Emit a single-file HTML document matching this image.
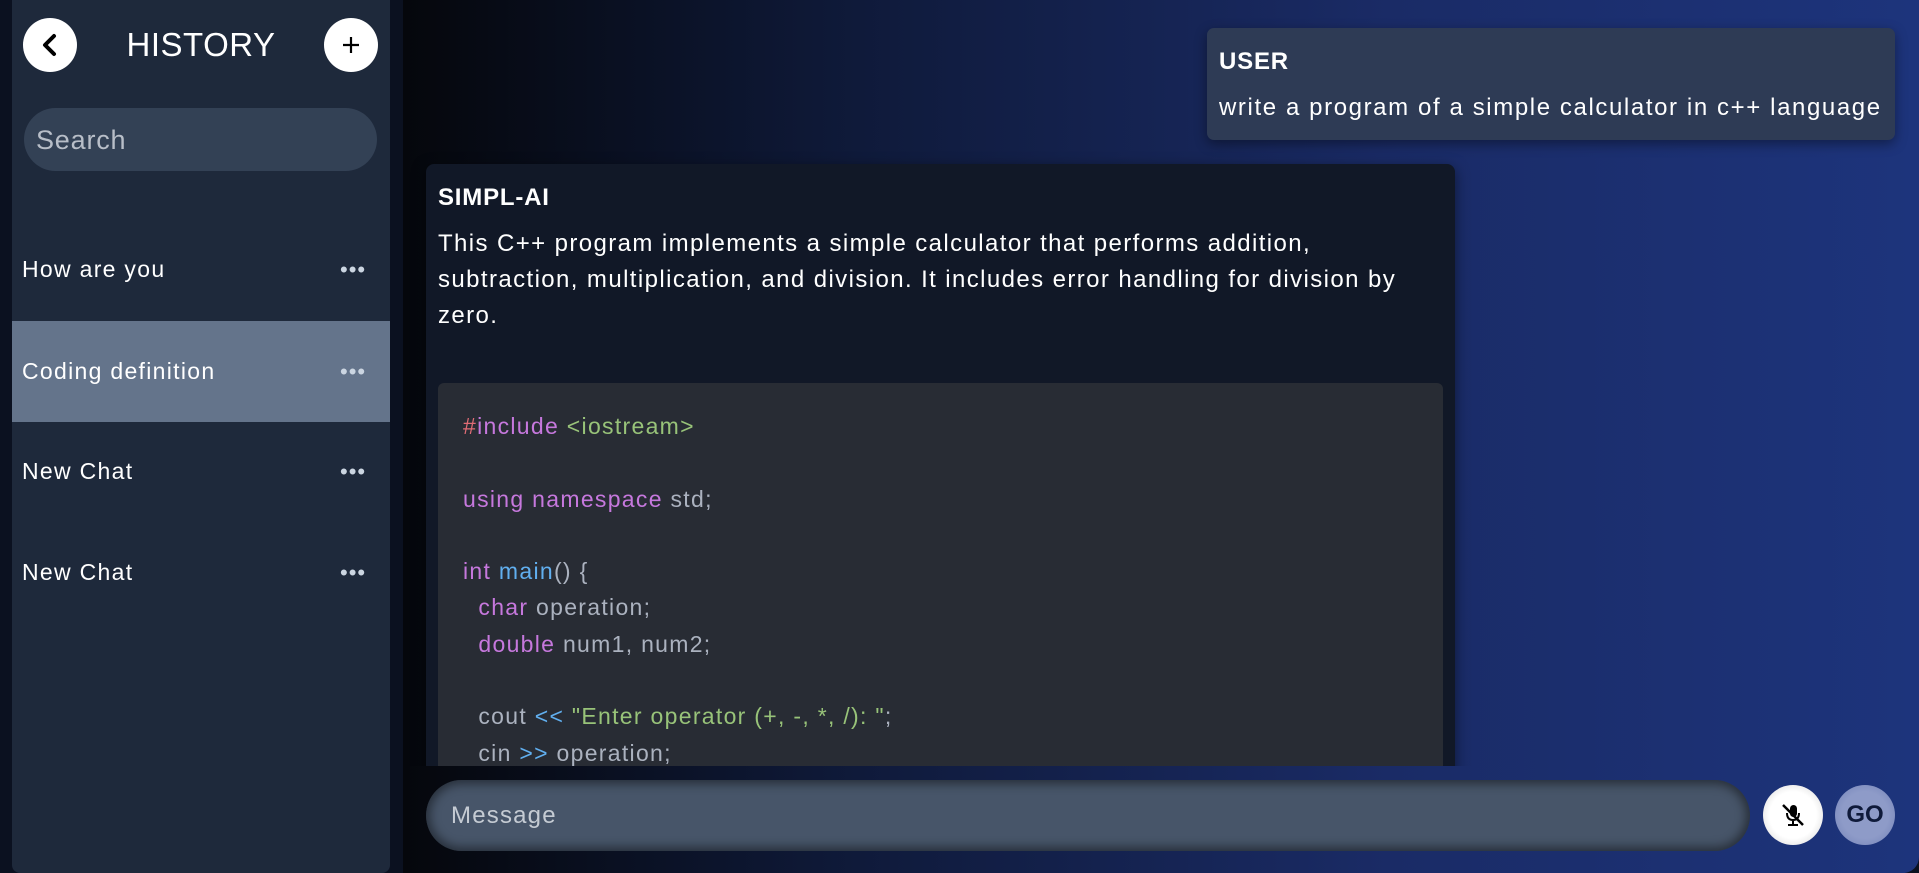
<!DOCTYPE html>
<html><head><style>
*{margin:0;padding:0;box-sizing:border-box}
body{width:1919px;height:873px;overflow:hidden;background:#0b1120;font-family:"Liberation Sans",sans-serif;color:#fff;position:relative}
.side{position:absolute;left:12px;top:0;width:378px;height:873px;background:#1e293b;border-radius:0 0 8px 8px}
.circ{position:absolute;width:54px;height:54px;border-radius:50%;background:#fff;top:18px}
.hist{position:absolute;left:0;width:402px;top:26px;text-align:center;font-size:33px;color:#fff;letter-spacing:.5px}
.search{position:absolute;left:24px;top:108px;width:353px;height:63px;border-radius:32px;background:#334155;color:#b8bec8;font-size:27px;padding:17px 0 0 12px;letter-spacing:.8px}
.item{position:absolute;left:12px;width:378px;height:101px;font-size:23px;color:#fff;padding-left:10px;line-height:101px;letter-spacing:1.3px}
.item .dots{position:absolute;left:328px;top:0;font-size:22px;letter-spacing:1px;color:#cbd5e1}
.main{position:absolute;left:403px;top:0;width:1516px;height:873px;background:linear-gradient(90deg,#05070c 0%,#0f1a3a 30%,#1a2b66 65%,#1d347c 100%);border-radius:0 0 16px 0}
.user{position:absolute;left:1207px;top:28px;width:688px;height:112px;background:#2e3b55;border-radius:7px;padding:20px 12px;box-shadow:0 4px 12px rgba(0,0,0,.4)}
.lbl{font-weight:bold;font-size:24px;letter-spacing:.8px}
.ai{position:absolute;left:426px;top:164px;width:1029px;height:640px;background:#111827;border-radius:8px;padding:20px 12px;box-shadow:0 4px 14px rgba(0,0,0,.5)}
.clip{position:absolute;left:403px;top:0;width:1516px;height:766px;overflow:hidden}
.p{font-size:24px;line-height:36px;margin-top:14px;letter-spacing:1.4px}
.code{position:absolute;left:12px;top:219px;width:1005px;height:500px;background:#282c34;border-radius:6px;padding:25px 25px;font-size:23px;line-height:36.3px;color:#abb2bf;white-space:pre;letter-spacing:1.3px}
.k{color:#c678dd}.f{color:#61afef}.s{color:#98c379}.r{color:#e06c75}
.msg{position:absolute;left:426px;top:780px;width:1324px;height:71px;border-radius:36px;background:#475569;box-shadow:inset 0 0 10px 4px rgba(0,0,0,.45);color:#c5cbd3;font-size:24px;padding:22px 0 0 25px;letter-spacing:1.2px}
.btn{position:absolute;width:60px;height:60px;border-radius:50%;top:785px}
</style></head><body>
<div class="side"></div>
<div class="circ" style="left:23px"><svg width="54" height="54"><path d="M31 18 L22 27 L31 36" stroke="#000" stroke-width="4" fill="none" stroke-linecap="round" stroke-linejoin="round"/></svg></div>
<div class="hist">HISTORY</div>
<div class="circ" style="left:324px"><svg width="54" height="54"><path d="M27 19V35M19 27H35" stroke="#000" stroke-width="2.2"/></svg></div>
<div class="search">Search</div>
<div class="item" style="top:219px">How are you<span class="dots">•••</span></div>
<div class="item" style="top:321px;background:#64748b">Coding definition<span class="dots">•••</span></div>
<div class="item" style="top:421px">New Chat<span class="dots">•••</span></div>
<div class="item" style="top:522px">New Chat<span class="dots">•••</span></div>
<div class="main"></div>
<div class="user"><div class="lbl">USER</div><div style="font-size:24px;margin-top:18px;letter-spacing:1.6px">write a program of a simple calculator in c++ language</div></div>
<div class="clip"><div class="ai" style="left:23px">
<div class="lbl">SIMPL-AI</div>
<div class="p">This C++ program implements a simple calculator that performs addition,<br>subtraction, multiplication, and division.  It includes error handling for division by<br>zero.</div>
<div class="code"><span class="r">#</span><span class="k">include</span> <span class="s">&lt;iostream&gt;</span>

<span class="k">using namespace</span> std;

<span class="k">int</span> <span class="f">main</span>() {
  <span class="k">char</span> operation;
  <span class="k">double</span> num1, num2;

  cout <span class="f">&lt;&lt;</span> <span class="s">"Enter operator (+, -, *, /): "</span>;
  cin <span class="f">&gt;&gt;</span> operation;
</div>
</div></div>
<div class="msg">Message</div>
<div class="btn" style="left:1763px;background:radial-gradient(circle,#fff 55%,#d0d0d0 100%)"><svg width="60" height="60"><rect x="27" y="20" width="7" height="12" rx="3.5" fill="#000"/><path d="M24 28q0 7 6 7t6-7M30 35v5M25 40h10" stroke="#000" stroke-width="2" fill="none"/><path d="M20 20L40 40" stroke="#000" stroke-width="2.5"/></svg></div>
<div class="btn" style="left:1835px;background:radial-gradient(circle,#8e9bc8 55%,#6f7fb5 100%);color:#0f1a3a;font-weight:bold;font-size:24px;text-align:center;line-height:60px">GO</div>
</body></html>
